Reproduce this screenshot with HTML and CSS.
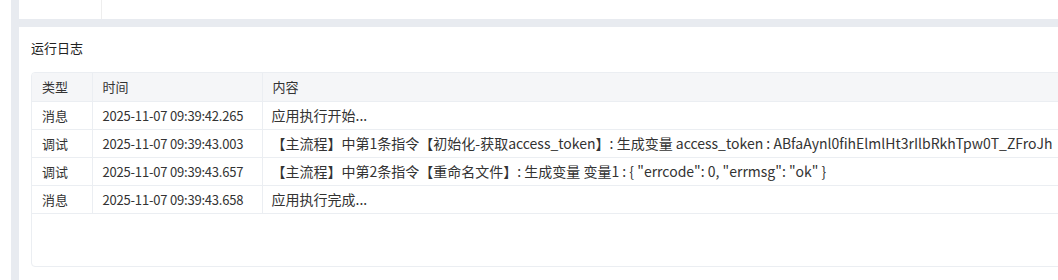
FILE: index.html
```html
<!DOCTYPE html>
<html lang="zh-CN">
<head>
<meta charset="utf-8">
<title>运行日志</title>
<link rel="stylesheet" href="styles.css">
</head>
<body>
<div class="shell">
  <div class="edge"></div>
  <main class="main">
    <section class="top-panel">
      <div class="top-left"></div>
      <div class="top-right"></div>
    </section>
    <section class="log-panel">
      <h2 class="log-title">运行日志</h2>
      <div class="table-wrap">
        <table class="log-table">
          <colgroup>
            <col class="c-type">
            <col class="c-time">
            <col class="c-content">
          </colgroup>
          <thead>
            <tr><th>类型</th><th>时间</th><th>内容</th></tr>
          </thead>
          <tbody>
            <tr><td>消息</td><td class="num">2025-11-07 09:39:42.265</td><td class="msg">应用执行开始...</td></tr>
            <tr><td>调试</td><td class="num">2025-11-07 09:39:43.003</td><td class="msg">【主流程】中第1条指令【初始化-获取access_token】: 生成变量 access_token : ABfaAynl0fihElmlHt3rIlbRkhTpw0T_ZFroJh</td></tr>
            <tr><td>调试</td><td class="num">2025-11-07 09:39:43.657</td><td class="msg">【主流程】中第2条指令【重命名文件】: 生成变量 变量1 : { "errcode": 0, "errmsg": "ok" }</td></tr>
            <tr><td>消息</td><td class="num">2025-11-07 09:39:43.658</td><td class="msg">应用执行完成...</td></tr>
          </tbody>
        </table>
      </div>
    </section>
  </main>
</div>
</body>
</html>
```

FILE: styles.css
```css
* { box-sizing: border-box; }

html, body {
  margin: 0;
  padding: 0;
  background: #ffffff;
  overflow: hidden;
  height: 280px;
}

body {
  font-family: "Noto Sans CJK SC", "Noto Sans", sans-serif;
  font-size: 13px;
  color: #333333;
}

.shell {
  display: flex;
  width: 1200px;
  height: 280px;
}

.edge {
  width: 11px;
  flex: none;
  background: #ffffff;
}

.main {
  flex: 1;
  background: #e8ebf0;
  padding-left: 8px;
  display: flex;
  flex-direction: column;
  gap: 8px;
}

.top-panel {
  height: 19px;
  background: #ffffff;
  display: flex;
  flex: none;
}

.top-left {
  width: 83px;
  border-right: 1px solid #eeeeee;
}

.log-panel {
  flex: 1;
  background: #ffffff;
  padding: 12px 0 0 12px;
}

.log-title {
  margin: 0;
  height: 33px;
  font-size: 13px;
  font-weight: normal;
  line-height: 17px;
  color: #222222;
}

.table-wrap {
  width: 1100px;
  height: 195px;
  border: 1px solid #ebeef2;
  border-radius: 4px;
  overflow: hidden;
}

.log-table {
  width: 100%;
  border-collapse: collapse;
  table-layout: fixed;
}

.c-type { width: 60px; }
.c-time { width: 170px; }

.log-table th,
.log-table td {
  height: 28px;
  padding: 0 0 0 10px;
  text-align: left;
  font-weight: normal;
  white-space: nowrap;
  overflow: hidden;
  border-bottom: 1px solid #ebeef2;
  border-right: 1px solid #ebeef2;
  line-height: 27px;
}

.log-table th {
  background: #f5f6f8;
  color: #333333;
}

.log-table td.num {
  letter-spacing: -0.2px;
}

.log-table td.msg {
  font-size: 14px;
  padding-left: 9px;
}
```
